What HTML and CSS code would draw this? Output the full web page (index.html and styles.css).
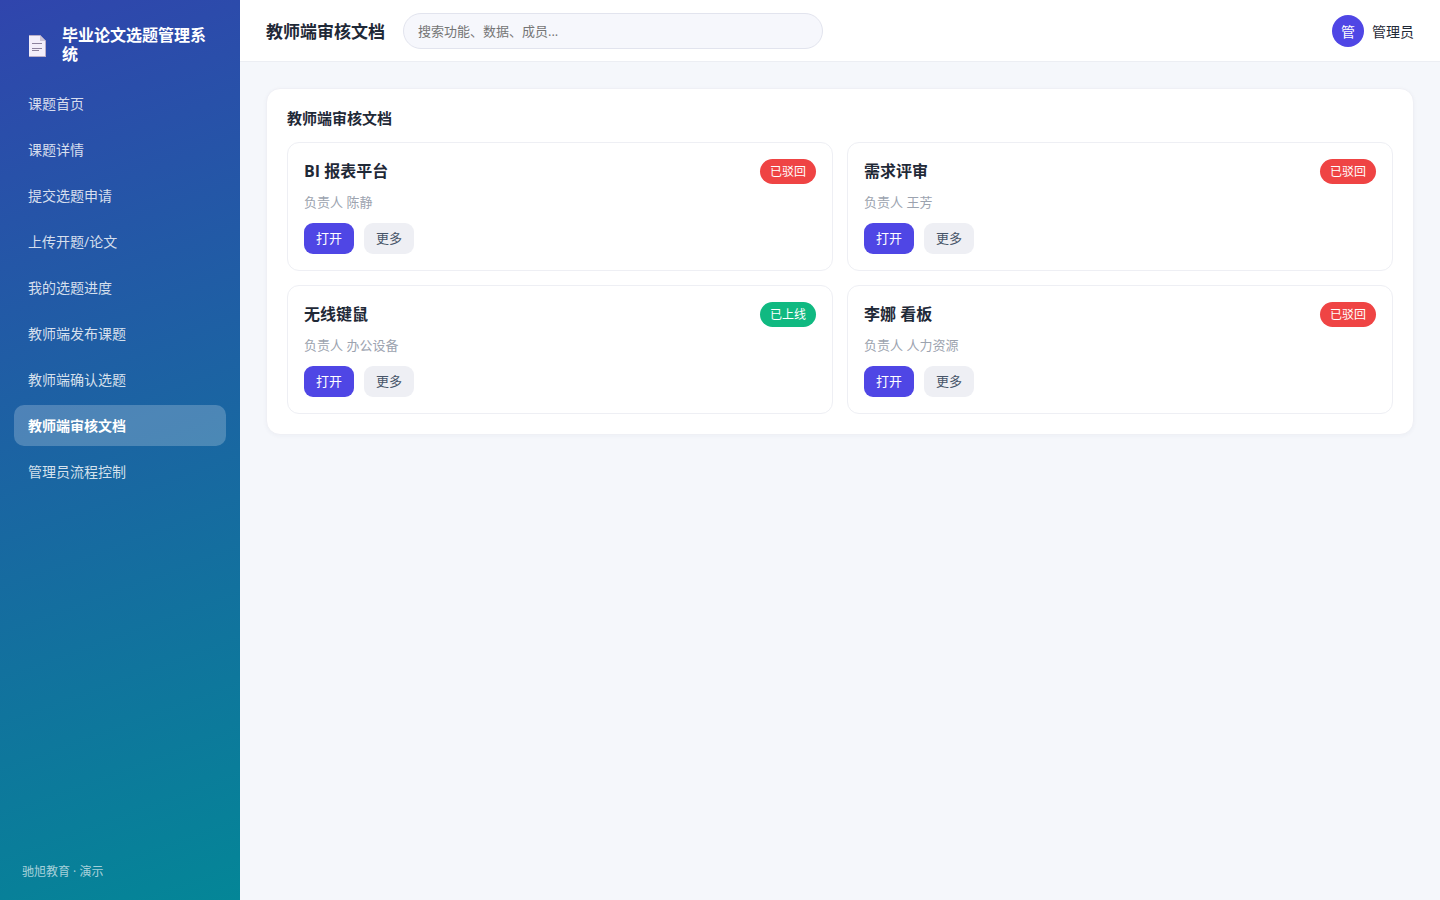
FILE: index.html
```
<!DOCTYPE html>
<html lang="zh-CN">

<head>
  <meta charset="UTF-8">
  <meta name="viewport" content="width=device-width, initial-scale=1.0">
  <title>教师端审核文档</title>
  <link rel="stylesheet" href="styles.css">
</head>

<body>
  <aside class="sidebar">
    <div class="brand">
      <svg class="brand-icon" width="22" height="24" viewBox="0 0 22 24" aria-hidden="true">
        <path d="M3 2h11l6 6v16H3z" fill="#b9aec8" />
        <path d="M3 3h11v5h5v15H3z" fill="#f3eefa" />
        <path d="M14 2l6 6h-6z" fill="#cdc5d8" />
        <path d="M6 10.500h10M6 15.500h10M6 17.500h7" stroke="#8d829d" stroke-width="1" />
      </svg>
      <span class="brand-name">毕业论文选题管理系统</span>
    </div>
    <nav class="nav">
      <a href="#">课题首页</a>
      <a href="#">课题详情</a>
      <a href="#">提交选题申请</a>
      <a href="#">上传开题/论文</a>
      <a href="#">我的选题进度</a>
      <a href="#">教师端发布课题</a>
      <a href="#">教师端确认选题</a>
      <a href="#" class="active">教师端审核文档</a>
      <a href="#">管理员流程控制</a>
    </nav>
    <div class="side-foot">驰旭教育 · 演示</div>
  </aside>

  <div class="main">
    <header class="topbar">
      <h1 class="page-title">教师端审核文档</h1>
      <input class="search" type="search" placeholder="搜索功能、数据、成员..." aria-label="搜索">
      <div class="user">
        <span class="avatar">管</span>
        <span>管理员</span>
      </div>
    </header>

    <main class="content">
      <section class="panel">
        <h2 class="panel-title">教师端审核文档</h2>
        <div class="grid">
          <article class="card">
            <div class="card-head">
              <h3>BI 报表平台</h3>
              <span class="tag red">已驳回</span>
            </div>
            <p class="meta">负责人 陈静</p>
            <div class="actions">
              <button class="btn primary">打开</button>
              <button class="btn">更多</button>
            </div>
          </article>
          <article class="card">
            <div class="card-head">
              <h3>需求评审</h3>
              <span class="tag red">已驳回</span>
            </div>
            <p class="meta">负责人 王芳</p>
            <div class="actions">
              <button class="btn primary">打开</button>
              <button class="btn">更多</button>
            </div>
          </article>
          <article class="card">
            <div class="card-head">
              <h3>无线键鼠</h3>
              <span class="tag green">已上线</span>
            </div>
            <p class="meta">负责人 办公设备</p>
            <div class="actions">
              <button class="btn primary">打开</button>
              <button class="btn">更多</button>
            </div>
          </article>
          <article class="card">
            <div class="card-head">
              <h3>李娜 看板</h3>
              <span class="tag red">已驳回</span>
            </div>
            <p class="meta">负责人 人力资源</p>
            <div class="actions">
              <button class="btn primary">打开</button>
              <button class="btn">更多</button>
            </div>
          </article>
        </div>
      </section>
    </main>
  </div>
</body>

</html>
```
FILE: styles.css
```
* {
  box-sizing: border-box;
}

body {
  margin: 0;
  min-height: 100vh;
  display: flex;
  background: #f5f7fb;
  color: #1f2937;
  font-family: "Open Sans", "Noto Sans CJK SC", sans-serif;
  font-size: 14px;
  line-height: 21px;
}

h1,
h2,
h3,
p {
  margin: 0;
}

button,
input {
  font-family: inherit;
}

.sidebar {
  width: 240px;
  flex-shrink: 0;
  display: flex;
  flex-direction: column;
  padding: 22px 14px 18px;
  background: linear-gradient(160deg, #3045ad, #048697);
  color: #fff;
}

.brand {
  display: flex;
  align-items: center;
  gap: 12px;
  padding: 4px 12px 19px;
}

.brand-icon {
  flex-shrink: 0;
}

.brand-name {
  flex: 1;
  padding-left: 2px;
  font-size: 16px;
  font-weight: 700;
  line-height: 19px;
}

.nav {
  display: flex;
  flex-direction: column;
  gap: 5px;
}

.nav a {
  padding: 10px 14px;
  border-radius: 10px;
  color: rgba(255, 255, 255, 0.82);
  text-decoration: none;
}

.nav .active {
  background: rgba(255, 255, 255, 0.22);
  color: #fff;
  font-weight: 700;
}

.side-foot {
  margin-top: auto;
  padding: 0 8px;
  font-size: 12px;
  color: rgba(255, 255, 255, 0.65);
}

.main {
  flex: 1;
  min-width: 0;
}

.topbar {
  display: flex;
  align-items: center;
  gap: 18px;
  padding: 13px 26px 12px;
  background: #fff;
  border-bottom: 1px solid #eceef3;
}

.page-title {
  font-size: 17px;
  font-weight: 700;
}

.search {
  width: 420px;
  height: 36px;
  padding: 0 14px;
  border: 1px solid #e2e4ee;
  border-radius: 18px;
  background: #f6f7fc;
  font-size: 13px;
  appearance: none;
}

.search::placeholder {
  color: #757575;
}

.user {
  margin-left: auto;
  display: flex;
  align-items: center;
  gap: 8px;
}

.avatar {
  width: 32px;
  height: 32px;
  display: flex;
  align-items: center;
  justify-content: center;
  border-radius: 50%;
  background: #4f46e5;
  color: #fff;
}

.content {
  padding: 26px;
}

.panel {
  padding: 20px;
  background: #fff;
  border: 1px solid #eff0f5;
  border-radius: 14px;
  box-shadow: 0 1px 4px rgba(30, 41, 90, 0.04);
}

.panel-title {
  margin-bottom: 14px;
  font-size: 15px;
  font-weight: 700;
  line-height: 19px;
}

.grid {
  display: grid;
  grid-template-columns: 1fr 1fr;
  gap: 14px;
}

.card {
  padding: 16px;
  border: 1px solid #eeeff4;
  border-radius: 12px;
}

.card-head {
  display: flex;
  align-items: center;
  justify-content: space-between;
}

.card h3 {
  font-size: 16px;
  font-weight: 700;
  line-height: 23px;
}

.tag {
  padding: 2px 10px;
  border-radius: 13px;
  color: #fff;
  font-size: 12px;
}

.red {
  background: #ef4444;
}

.green {
  background: #10b981;
}

.meta {
  margin: 8px 0 10px;
  color: #9ca3af;
  font-size: 13px;
}

.actions {
  display: flex;
  gap: 10px;
}

.btn {
  padding: 5px 12px;
  border: 0;
  border-radius: 9px;
  background: #eeeff4;
  color: #475569;
  font-size: 13px;
  line-height: 21px;
}

.primary {
  background: #4f46e5;
  color: #fff;
}
```
